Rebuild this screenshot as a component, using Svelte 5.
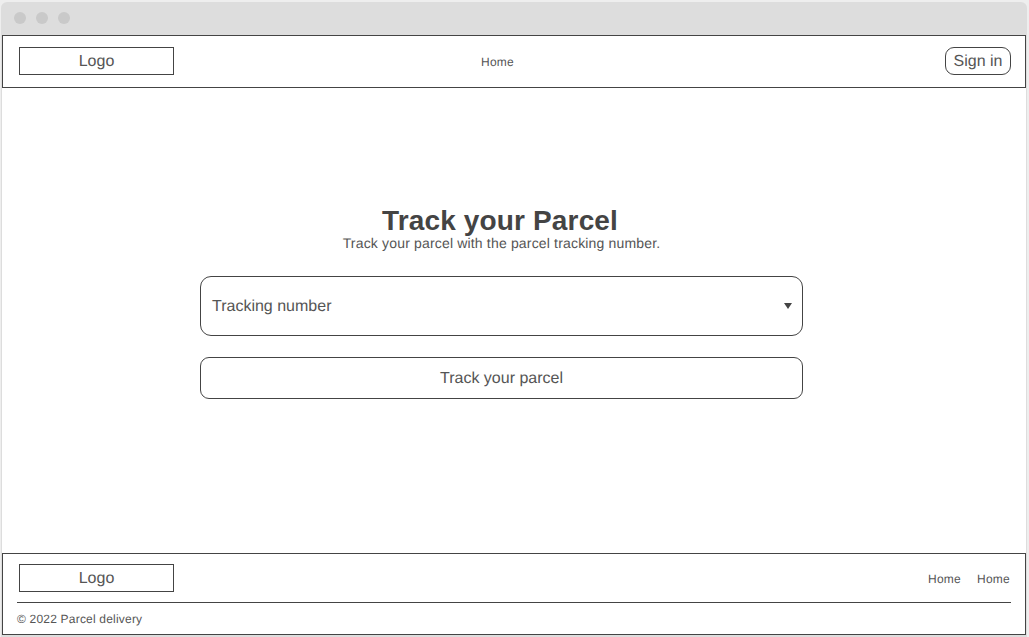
<script>
  const footerLinks = ['Home', 'Home'];
</script>

<div class="window">
  <div class="titlebar"><i></i><i></i><i></i></div>
  <div class="page">
    <header>
      <div class="logo">Logo</div>
      <nav><span class="link">Home</span></nav>
      <button class="signin">Sign in</button>
    </header>
    <main>
      <h1>Track your Parcel</h1>
      <p class="sub">Track your parcel with the parcel tracking number.</p>
      <div class="select">
        <span>Tracking number</span>
        <svg width="8" height="6" viewBox="0 0 8 6"><path d="M0 0H8L4 6Z" fill="#444" /></svg>
      </div>
      <button class="track">Track your parcel</button>
    </main>
    <footer>
      <div class="top">
        <div class="logo">Logo</div>
        <div class="links">
          {#each footerLinks as label}
            <span class="link">{label}</span>
          {/each}
        </div>
      </div>
      <div class="copy">© 2022 Parcel delivery</div>
    </footer>
  </div>
</div>

<style>
  :global(body) {
    background: #eee;
    overflow: hidden;
  }
  * {
    box-sizing: border-box;
  }
  .window {
    height: 637px;
    padding: 2px 2px 0 1px;
    font-family: 'Liberation Sans', Arial, sans-serif;
    font-size: 16px;
    text-rendering: geometricPrecision;
    color: #555;
    display: flex;
    flex-direction: column;
  }
  .titlebar {
    height: 33px;
    flex: none;
    background: #ddd;
    border-radius: 6px 6px 0 0;
    display: flex;
    gap: 10px;
    padding: 10px 13px;
  }
  .titlebar i {
    width: 12px;
    height: 12px;
    border-radius: 50%;
    background: #c9c9c9;
  }
  .page {
    flex: 1;
    background: #fff;
    border: solid #ddd;
    border-width: 0 1px 2px;
    display: flex;
    flex-direction: column;
  }
  header,
  footer {
    border: 1px solid #444;
    flex: none;
  }
  header {
    height: 53px;
    display: grid;
    grid-template-columns: 155px 1fr 66px;
    align-items: start;
    padding: 11px 14px 0 16px;
  }
  .logo {
    width: 155px;
    height: 28px;
    border: 1px solid #444;
    text-align: center;
    line-height: 28px;
  }
  button {
    font: inherit;
    color: inherit;
    text-rendering: inherit;
    background: #fff;
    border: 1px solid #444;
    padding: 2px 0 0;
  }
  .signin {
    height: 28px;
    border-radius: 9px;
    line-height: 24px;
  }
  nav {
    padding-left: 307px;
    line-height: 30px;
  }
  .link {
    font-size: 12px;
    letter-spacing: 0.25px;
    display: block;
  }
  main {
    flex: 1;
    width: 603px;
    margin-left: 198px;
    padding-top: 117px;
  }
  h1 {
    margin: 0;
    padding-right: 3px;
    font-size: 28px;
    line-height: 32px;
    letter-spacing: 0.15px;
    text-rendering: auto;
    color: #444;
    text-align: center;
  }
  .sub {
    margin: 0;
    font-size: 14px;
    line-height: 12px;
    letter-spacing: 0.17px;
    text-align: center;
  }
  .select {
    margin-top: 27px;
    height: 60px;
    border: 1px solid #444;
    border-radius: 11px;
    display: flex;
    align-items: center;
    justify-content: space-between;
    padding: 0 10px 0 11px;
  }
  .select span {
    padding-top: 2px;
  }
  .track {
    display: block;
    margin-top: 21px;
    width: 100%;
    height: 42px;
    border-radius: 9px;
  }
  footer {
    height: 82px;
    padding: 10px 14px 0;
  }
  .top {
    height: 39px;
    padding-left: 2px;
    border-bottom: 1px solid #444;
    display: flex;
    justify-content: space-between;
  }
  .links {
    display: flex;
    gap: 16px;
    padding-right: 1px;
    line-height: 30px;
  }
  .copy {
    font-size: 12px;
    line-height: 32px;
    letter-spacing: 0.2px;
  }
</style>
